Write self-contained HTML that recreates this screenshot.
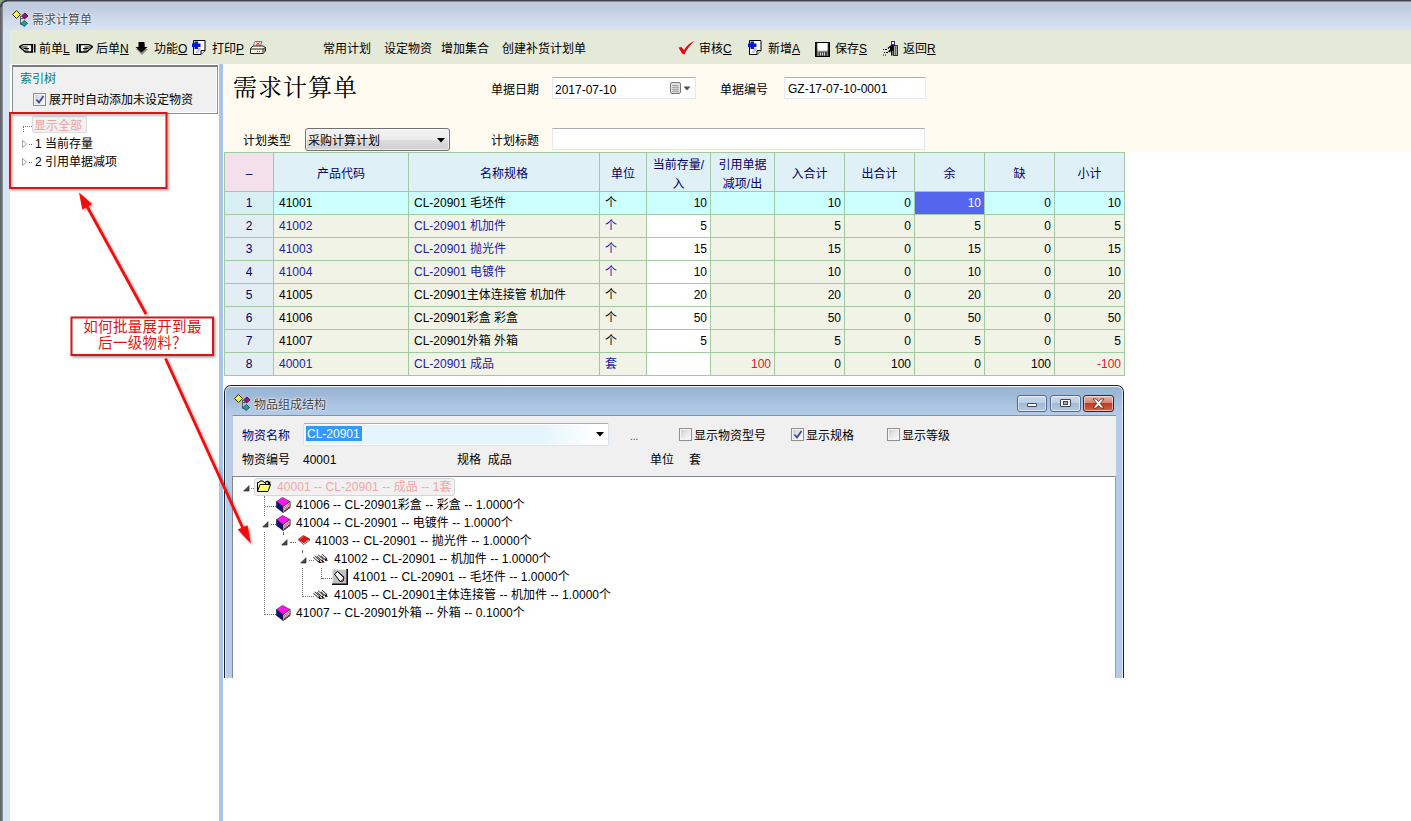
<!DOCTYPE html>
<html lang="zh-CN">
<head>
<meta charset="utf-8">
<title>需求计算单</title>
<style>
*{box-sizing:border-box;margin:0;padding:0}
html,body{width:1411px;height:821px;overflow:hidden;background:#fff}
body{font-family:"Liberation Sans","Noto Sans CJK SC",sans-serif;font-size:12px;color:#000;position:relative;line-height:14px}
.abs{position:absolute}
.t{position:absolute;white-space:nowrap;line-height:14px}
u{text-decoration:underline}
.c{position:absolute;height:22px;line-height:23px;white-space:nowrap;overflow:hidden}
.h{position:absolute;height:38px;color:#000066;text-align:center;line-height:15px;display:flex;align-items:center;justify-content:center;padding-top:4px}
.r{text-align:right;padding-right:3px}
.l{padding-left:5px}
.ctr{text-align:center}
.bl{color:#2020a8}
.rd{color:#d8202a}
.chk{position:absolute;width:13px;height:13px;border:1px solid #8e8f8f;background:linear-gradient(135deg,#c4c8ce,#e6e8ea 50%,#fbfbfb);box-shadow:inset 0 0 0 1px #f4f4f4}
.wb{position:absolute;border:1px solid #56698a;border-radius:3px;box-shadow:inset 0 0 0 1px rgba(255,255,255,.55)}
.dv{position:absolute;width:1px;border-left:1px dotted #6e6e6e}
.dh{position:absolute;height:1px;border-top:1px dotted #6e6e6e}
</style>
</head>
<body>
<div class="abs" style="left:0px;top:0px;width:1411px;height:30px;background:linear-gradient(#bec8da 0,#c3cde0 30%,#cfdaea 65%,#d7e3f2 100%)"></div>
<div class="abs" style="left:10px;top:30px;width:1401px;height:34px;background:#e4e9d8"></div>
<div class="abs" style="left:10px;top:64px;width:209px;height:757px;background:#fff"></div>
<div class="abs" style="left:223px;top:64px;width:1188px;height:88px;background:#fffbf0"></div>
<div class="abs" style="left:219px;top:64px;width:4px;height:757px;background:#a9c4ec"></div>
<div class="abs" style="left:0px;top:30px;width:10px;height:791px;background:#d6e5f5"></div>
<div class="abs" style="left:0px;top:0px;width:3px;height:821px;background:linear-gradient(90deg,#55585e,#8d9096)"></div>
<div class="abs" style="left:0px;top:0px;width:1411px;height:2px;background:linear-gradient(#3c4049 0,#3c4049 55%,#e8eef8 100%)"></div>
<svg class="abs" style="left:0;top:0" width="8" height="8" viewBox="0 0 8 8"><path d="M0 0h6C3 .5 .5 3 0 6z" fill="#8a9a7a"/><path d="M.8 7C1.200 3.500 3.500 1.200 7 .8" fill="none" stroke="#3c4049" stroke-width="1.600"/></svg>
<svg class="abs" style="left:12px;top:10px" width="17" height="17" viewBox="0 0 17 17"><path d="M8.500 6v8.500h3M8.500 8.500h3" fill="none" stroke="#5a6068" stroke-width="1"/><path d="M0.500 4.500l4-4 4 4-4 4z" fill="#f0f020" stroke="#33331a" stroke-width="1"/><path d="M3 4.500l1.500-1.500" stroke="#fff" stroke-width="1"/><path d="M9.500 6l3.500-3 3 3-3.500 3z" fill="#a0107a" stroke="#3a1030" stroke-width=".8"/><path d="M9 13.500l3.500-3 3 3-3.500 3z" fill="#10a8a0" stroke="#104040" stroke-width=".8"/></svg>
<div class="t" style="left:32px;top:13px;color:#4c4f55;text-shadow:0 0 3px #fff,0 0 2px #fff">需求计算单</div>
<svg class="abs" style="left:19px;top:44px" width="17" height="9" viewBox="0 0 17 9"><path d="M0.500 2.700L4.500 0.500H13v7.500H6.500z" fill="#fff" stroke="#000" stroke-width="1.400"/><path d="M12.500 0h1.800v8.500h-1.800zM15 0h1.500v8.500H15z" fill="#000"/><path d="M14.300 1h.7v6.500h-.7z" fill="#b8ecec"/><path d="M2.500 3h6M4.500 4.500h5.500M6 6h3.500" stroke="#000" stroke-width="1" fill="none"/></svg>
<svg class="abs" style="left:76px;top:44px" width="17" height="9" viewBox="0 0 17 9"><path d="M16.500 2.700L12.500 0.500H4v7.500h6.500z" fill="#fff" stroke="#000" stroke-width="1.400"/><path d="M2.700 0h1.800v8.500H2.700zM0.500 0H2v8.500H0.500z" fill="#000"/><path d="M2 1h.7v6.500H2z" fill="#b8ecec"/><path d="M14.500 3h-6M12.500 4.500H7M11 6H7.500" stroke="#000" stroke-width="1" fill="none"/></svg>
<svg class="abs" style="left:135px;top:42px" width="13" height="13" viewBox="0 0 13 13"><path d="M4 2h6v5h3l-6 6-6-6h3z" fill="#8c8c84"/><path d="M3.500 0h6v5h3l-6 5.500-6-5.500h3z" fill="#000"/></svg>
<svg class="abs" style="left:192px;top:40px" width="14" height="15" viewBox="0 0 14 15"><path d="M1.500 0.500h11.500v10l-4 4h-7.500z" fill="#fff" stroke="#000" stroke-width="1"/><path d="M9 14.500v-4h4" fill="#d8d8d8" stroke="#000" stroke-width="1"/><path d="M5.500 8h3v3h-3z" fill="#c0c0d8"/><path d="M4 12h3" stroke="#9a9a9a" stroke-width="1"/><path d="M2.500 1.500h3.500v2h2.500v3.500h-2.500v2H2.500v-2H0V3.500h2.500z" fill="#0018e0"/></svg>
<svg class="abs" style="left:250px;top:41px" width="16" height="13" viewBox="0 0 16 13"><path d="M5 0.500h7l-2 5H3z" fill="#fff" stroke="#555" stroke-width=".8"/><path d="M6.500 1.500l3 2M9.500 1.500l-3 2M5.500 4h4" stroke="#e03030" stroke-width=".9"/><path d="M0.500 7.500l2.500-2.500h10l2.500 1.500v3.500l-2.500 2.500h-12.500z" fill="#fbf7e6" stroke="#222" stroke-width="1"/><path d="M0.500 8h12.500l2.500-1.500M13 8v4.500" fill="none" stroke="#222" stroke-width="1"/><path d="M13.500 8.500l1.500-1v3l-1.500 1.500z" fill="#888"/><path d="M7 10.500h1M9 10.500h1" stroke="#d03030" stroke-width="1"/></svg>
<svg class="abs" style="left:678px;top:41px" width="17" height="14" viewBox="0 0 17 14"><path d="M0.500 6.500l3-0.500 2.500 3C8.500 4.500 12 1.500 16.500 0 12 4 8.500 8.500 6.500 13.500 5 13 4.500 13 4 12.500z" fill="#e00c14"/></svg>
<svg class="abs" style="left:748px;top:40px" width="14" height="15" viewBox="0 0 14 15"><path d="M1.500 0.500h11.500v10l-4 4h-7.500z" fill="#fff" stroke="#000" stroke-width="1"/><path d="M9 14.500v-4h4" fill="#d8d8d8" stroke="#000" stroke-width="1"/><path d="M5.500 8h3v3h-3z" fill="#c0c0d8"/><path d="M4 12h3" stroke="#9a9a9a" stroke-width="1"/><path d="M2.500 1.500h3.500v2h2.500v3.500h-2.500v2H2.500v-2H0V3.500h2.500z" fill="#0018e0"/></svg>
<svg class="abs" style="left:815px;top:42px" width="15" height="15" viewBox="0 0 15 15"><rect x="0.500" y="0.500" width="14" height="14" fill="#c8c8c8" stroke="#000" stroke-width="1"/><path d="M1 1h1.500v13H1zM12.500 1h1.500v13h-1.500z" fill="#222"/><rect x="2.500" y="1" width="10" height="7.500" fill="#fff"/><rect x="3.500" y="9.500" width="8.500" height="4.500" fill="#444"/><path d="M5.500 10.500v3M7.500 10.500v3M9.500 10.500v3" stroke="#d8d8d8" stroke-width="1"/></svg>
<svg class="abs" style="left:883px;top:41px" width="15" height="15" viewBox="0 0 15 15"><rect x="8.500" y="0.500" width="3" height="3" fill="#fff" stroke="#402080" stroke-width="1"/><rect x="10.500" y="4.500" width="4" height="10" fill="#a8a8a8" stroke="#333" stroke-width="1"/><path d="M12.500 5v9" stroke="#666" stroke-width="1"/><path d="M8 4h2.500v5.500l-1 .5v4.500H8V10l-1.500 1.500L5 10.500 7 8.500V6.500L5.500 8 4.500 7z" fill="#000"/><path d="M0 8.500h1M2 8.500h2M1 11.500h1M3 11.500h2M0 14h1M2 14h1" stroke="#000" stroke-width="1"/></svg>
<div class="t" style="left:39px;top:42px;">前单<u>L</u></div>
<div class="t" style="left:96px;top:42px;">后单<u>N</u></div>
<div class="t" style="left:154px;top:42px;">功能<u>O</u></div>
<div class="t" style="left:212px;top:42px;">打印<u>P</u></div>
<div class="t" style="left:323px;top:42px;">常用计划</div>
<div class="t" style="left:384px;top:42px;">设定物资</div>
<div class="t" style="left:441px;top:42px;">增加集合</div>
<div class="t" style="left:502px;top:42px;">创建补货计划单</div>
<div class="t" style="left:699px;top:42px;">审核<u>C</u></div>
<div class="t" style="left:768px;top:42px;">新增<u>A</u></div>
<div class="t" style="left:835px;top:42px;">保存<u>S</u></div>
<div class="t" style="left:903px;top:42px;">返回<u>R</u></div>
<div class="abs" style="left:12px;top:65px;width:206px;height:49px;background:#f0f0f0;border:1px solid #8e8f8f;border-top:2px solid #7b7b7b;box-shadow:inset -1px -1px 0 #fff"></div>
<div class="t" style="left:20px;top:72px;color:#008080">索引树</div>
<div class="chk" style="left:33px;top:93px;width:13px;height:13px;"><svg class="abs" style="left:1px;top:1px" width="10" height="10" viewBox="0 0 10 10"><path d="M1.500 4.500l2.500 3 4.500-6.500" fill="none" stroke="#3a4a9a" stroke-width="1.800"/></svg></div>
<div class="t" style="left:49px;top:93px;">展开时自动添加未设定物资</div>
<div class="dh" style="left:23px;top:126px;width:9px;height:1px;"></div>
<div class="dv" style="left:23px;top:126px;width:1px;height:6px;"></div>
<div class="abs" style="left:32px;top:116px;width:55px;height:17px;background:#f2f2f2;border:1px solid #dcdcdc;border-radius:2px"></div>
<div class="t" style="left:34px;top:119px;color:#f0a0a0">显示全部</div>
<svg class="abs" style="left:21px;top:139px" width="8" height="10" viewBox="0 0 8 10"><path d="M1.500 1.500l4 3.500-4 3.500z" fill="#fff" stroke="#a0a0a0" stroke-width="1"/></svg>
<svg class="abs" style="left:21px;top:157px" width="8" height="10" viewBox="0 0 8 10"><path d="M1.500 1.500l4 3.500-4 3.500z" fill="#fff" stroke="#a0a0a0" stroke-width="1"/></svg>
<div class="dh" style="left:29px;top:144px;width:3px;height:1px;"></div>
<div class="dh" style="left:29px;top:162px;width:3px;height:1px;"></div>
<div class="t" style="left:35px;top:137px;">1 当前存量</div>
<div class="t" style="left:35px;top:155px;">2 引用单据减项</div>
<div class="t" style="left:233px;top:73px;font-family:'Liberation Serif','Noto Serif CJK SC',serif;font-size:24px;line-height:30px;letter-spacing:1px">需求计算单</div>
<div class="t" style="left:491px;top:83px;">单据日期</div>
<div class="abs" style="left:552px;top:77px;width:144px;height:22px;background:#fff;border:1px solid #e3e9ef;border-top-color:#abadb3"></div>
<div class="t" style="left:555px;top:83px;">2017-07-10</div>
<svg class="abs" style="left:670px;top:82px" width="22" height="13" viewBox="0 0 22 13"><rect x=".5" y=".5" width="10" height="11" rx="1.500" fill="#e4e4e4" stroke="#7a7a7a"/><path d="M2 3.500h7M2 5.500h7M2 7.500h7M2 9.500h7M4 2.500v8M7 2.500v8" stroke="#a0a0a0" stroke-width=".8"/><path d="M13.500 4.500h7l-3.500 4z" fill="#505050"/></svg>
<div class="t" style="left:720px;top:83px;">单据编号</div>
<div class="abs" style="left:784px;top:77px;width:142px;height:22px;background:#fff;border:1px solid #e3e9ef;border-top-color:#abadb3"></div>
<div class="t" style="left:788px;top:82px;">GZ-17-07-10-0001</div>
<div class="t" style="left:243px;top:134px;">计划类型</div>
<div class="abs" style="left:305px;top:128px;width:145px;height:23px;border:1px solid #707070;border-radius:3px;background:linear-gradient(#f2f2f2,#ebebeb 50%,#dddddd 51%,#cfcfcf);box-shadow:inset 0 0 0 1px rgba(255,255,255,.6)"></div>
<div class="t" style="left:308px;top:134px;">采购计算计划</div>
<svg class="abs" style="left:437px;top:138px" width="8" height="5" viewBox="0 0 8 5"><path d="M0 0h8l-4 4.500z" fill="#000"/></svg>
<div class="t" style="left:491px;top:134px;">计划标题</div>
<div class="abs" style="left:552px;top:128px;width:373px;height:22px;background:#fff;border:1px solid #e3e9ef;border-top-color:#abadb3"></div>
<div class="abs" style="left:224px;top:152px;width:901px;height:224px;background:#a3c9a3"></div>
<div class="h" style="left:225px;top:153px;width:48px;background:#f3e0ea;">–</div>
<div class="h" style="left:274px;top:153px;width:134px;background:#dff0f7;">产品代码</div>
<div class="h" style="left:409px;top:153px;width:190px;background:#dff0f7;">名称规格</div>
<div class="h" style="left:600px;top:153px;width:46px;background:#dff0f7;">单位</div>
<div class="h" style="left:647px;top:153px;width:63px;background:#dff0f7;line-height:19px;padding-top:6px;">当前存量/<br>入</div>
<div class="h" style="left:711px;top:153px;width:63px;background:#dff0f7;line-height:19px;padding-top:6px;">引用单据<br>减项/出</div>
<div class="h" style="left:775px;top:153px;width:69px;background:#dff0f7;">入合计</div>
<div class="h" style="left:845px;top:153px;width:69px;background:#dff0f7;">出合计</div>
<div class="h" style="left:915px;top:153px;width:69px;background:#dff0f7;">余</div>
<div class="h" style="left:985px;top:153px;width:69px;background:#dff0f7;">缺</div>
<div class="h" style="left:1055px;top:153px;width:69px;background:#dff0f7;">小计</div>
<div class="c ctr" style="left:225px;top:192px;width:48px;background:#d8f0f4;color:#000066;">1</div>
<div class="c l" style="left:274px;top:192px;width:134px;background:#ccffff;">41001</div>
<div class="c l" style="left:409px;top:192px;width:190px;background:#ccffff;">CL-20901 毛坯件</div>
<div class="c l" style="left:600px;top:192px;width:46px;background:#ccffff;">个</div>
<div class="c r" style="left:647px;top:192px;width:63px;background:#ccffff;">10</div>
<div class="c r" style="left:711px;top:192px;width:63px;background:#ccffff;"></div>
<div class="c r" style="left:775px;top:192px;width:69px;background:#ccffff;">10</div>
<div class="c r" style="left:845px;top:192px;width:69px;background:#ccffff;">0</div>
<div class="c r" style="left:915px;top:192px;width:69px;background:#5566ee;color:#fff;">10</div>
<div class="c r" style="left:985px;top:192px;width:69px;background:#ccffff;">0</div>
<div class="c r" style="left:1055px;top:192px;width:69px;background:#ccffff;">10</div>
<div class="c ctr" style="left:225px;top:215px;width:48px;background:#e2eef4;color:#000066;">2</div>
<div class="c l bl" style="left:274px;top:215px;width:134px;background:#f0f3e6;">41002</div>
<div class="c l bl" style="left:409px;top:215px;width:190px;background:#f0f3e6;">CL-20901 机加件</div>
<div class="c l bl" style="left:600px;top:215px;width:46px;background:#f0f3e6;">个</div>
<div class="c r" style="left:647px;top:215px;width:63px;background:#ffffff;">5</div>
<div class="c r" style="left:711px;top:215px;width:63px;background:#f0f3e6;"></div>
<div class="c r" style="left:775px;top:215px;width:69px;background:#f0f3e6;">5</div>
<div class="c r" style="left:845px;top:215px;width:69px;background:#f0f3e6;">0</div>
<div class="c r" style="left:915px;top:215px;width:69px;background:#f0f3e6;">5</div>
<div class="c r" style="left:985px;top:215px;width:69px;background:#f0f3e6;">0</div>
<div class="c r" style="left:1055px;top:215px;width:69px;background:#f0f3e6;">5</div>
<div class="c ctr" style="left:225px;top:238px;width:48px;background:#e2eef4;color:#000066;">3</div>
<div class="c l bl" style="left:274px;top:238px;width:134px;background:#f0f3e6;">41003</div>
<div class="c l bl" style="left:409px;top:238px;width:190px;background:#f0f3e6;">CL-20901 抛光件</div>
<div class="c l bl" style="left:600px;top:238px;width:46px;background:#f0f3e6;">个</div>
<div class="c r" style="left:647px;top:238px;width:63px;background:#ffffff;">15</div>
<div class="c r" style="left:711px;top:238px;width:63px;background:#f0f3e6;"></div>
<div class="c r" style="left:775px;top:238px;width:69px;background:#f0f3e6;">15</div>
<div class="c r" style="left:845px;top:238px;width:69px;background:#f0f3e6;">0</div>
<div class="c r" style="left:915px;top:238px;width:69px;background:#f0f3e6;">15</div>
<div class="c r" style="left:985px;top:238px;width:69px;background:#f0f3e6;">0</div>
<div class="c r" style="left:1055px;top:238px;width:69px;background:#f0f3e6;">15</div>
<div class="c ctr" style="left:225px;top:261px;width:48px;background:#e2eef4;color:#000066;">4</div>
<div class="c l bl" style="left:274px;top:261px;width:134px;background:#f0f3e6;">41004</div>
<div class="c l bl" style="left:409px;top:261px;width:190px;background:#f0f3e6;">CL-20901 电镀件</div>
<div class="c l bl" style="left:600px;top:261px;width:46px;background:#f0f3e6;">个</div>
<div class="c r" style="left:647px;top:261px;width:63px;background:#ffffff;">10</div>
<div class="c r" style="left:711px;top:261px;width:63px;background:#f0f3e6;"></div>
<div class="c r" style="left:775px;top:261px;width:69px;background:#f0f3e6;">10</div>
<div class="c r" style="left:845px;top:261px;width:69px;background:#f0f3e6;">0</div>
<div class="c r" style="left:915px;top:261px;width:69px;background:#f0f3e6;">10</div>
<div class="c r" style="left:985px;top:261px;width:69px;background:#f0f3e6;">0</div>
<div class="c r" style="left:1055px;top:261px;width:69px;background:#f0f3e6;">10</div>
<div class="c ctr" style="left:225px;top:284px;width:48px;background:#e2eef4;color:#000066;">5</div>
<div class="c l" style="left:274px;top:284px;width:134px;background:#f0f3e6;">41005</div>
<div class="c l" style="left:409px;top:284px;width:190px;background:#f0f3e6;">CL-20901主体连接管 机加件</div>
<div class="c l" style="left:600px;top:284px;width:46px;background:#f0f3e6;">个</div>
<div class="c r" style="left:647px;top:284px;width:63px;background:#ffffff;">20</div>
<div class="c r" style="left:711px;top:284px;width:63px;background:#f0f3e6;"></div>
<div class="c r" style="left:775px;top:284px;width:69px;background:#f0f3e6;">20</div>
<div class="c r" style="left:845px;top:284px;width:69px;background:#f0f3e6;">0</div>
<div class="c r" style="left:915px;top:284px;width:69px;background:#f0f3e6;">20</div>
<div class="c r" style="left:985px;top:284px;width:69px;background:#f0f3e6;">0</div>
<div class="c r" style="left:1055px;top:284px;width:69px;background:#f0f3e6;">20</div>
<div class="c ctr" style="left:225px;top:307px;width:48px;background:#e2eef4;color:#000066;">6</div>
<div class="c l" style="left:274px;top:307px;width:134px;background:#f0f3e6;">41006</div>
<div class="c l" style="left:409px;top:307px;width:190px;background:#f0f3e6;">CL-20901彩盒 彩盒</div>
<div class="c l" style="left:600px;top:307px;width:46px;background:#f0f3e6;">个</div>
<div class="c r" style="left:647px;top:307px;width:63px;background:#ffffff;">50</div>
<div class="c r" style="left:711px;top:307px;width:63px;background:#f0f3e6;"></div>
<div class="c r" style="left:775px;top:307px;width:69px;background:#f0f3e6;">50</div>
<div class="c r" style="left:845px;top:307px;width:69px;background:#f0f3e6;">0</div>
<div class="c r" style="left:915px;top:307px;width:69px;background:#f0f3e6;">50</div>
<div class="c r" style="left:985px;top:307px;width:69px;background:#f0f3e6;">0</div>
<div class="c r" style="left:1055px;top:307px;width:69px;background:#f0f3e6;">50</div>
<div class="c ctr" style="left:225px;top:330px;width:48px;background:#e2eef4;color:#000066;">7</div>
<div class="c l" style="left:274px;top:330px;width:134px;background:#f0f3e6;">41007</div>
<div class="c l" style="left:409px;top:330px;width:190px;background:#f0f3e6;">CL-20901外箱 外箱</div>
<div class="c l" style="left:600px;top:330px;width:46px;background:#f0f3e6;">个</div>
<div class="c r" style="left:647px;top:330px;width:63px;background:#ffffff;">5</div>
<div class="c r" style="left:711px;top:330px;width:63px;background:#f0f3e6;"></div>
<div class="c r" style="left:775px;top:330px;width:69px;background:#f0f3e6;">5</div>
<div class="c r" style="left:845px;top:330px;width:69px;background:#f0f3e6;">0</div>
<div class="c r" style="left:915px;top:330px;width:69px;background:#f0f3e6;">5</div>
<div class="c r" style="left:985px;top:330px;width:69px;background:#f0f3e6;">0</div>
<div class="c r" style="left:1055px;top:330px;width:69px;background:#f0f3e6;">5</div>
<div class="c ctr" style="left:225px;top:353px;width:48px;background:#e2eef4;color:#000066;">8</div>
<div class="c l bl" style="left:274px;top:353px;width:134px;background:#f0f3e6;">40001</div>
<div class="c l bl" style="left:409px;top:353px;width:190px;background:#f0f3e6;">CL-20901 成品</div>
<div class="c l bl" style="left:600px;top:353px;width:46px;background:#f0f3e6;">套</div>
<div class="c r" style="left:647px;top:353px;width:63px;background:#ffffff;"></div>
<div class="c r rd" style="left:711px;top:353px;width:63px;background:#f0f3e6;">100</div>
<div class="c r" style="left:775px;top:353px;width:69px;background:#f0f3e6;">0</div>
<div class="c r" style="left:845px;top:353px;width:69px;background:#f0f3e6;">100</div>
<div class="c r" style="left:915px;top:353px;width:69px;background:#f0f3e6;">0</div>
<div class="c r" style="left:985px;top:353px;width:69px;background:#f0f3e6;">100</div>
<div class="c r rd" style="left:1055px;top:353px;width:69px;background:#f0f3e6;">-100</div>
<div class="abs" style="left:224px;top:385px;width:900px;height:293px;border:1px solid #1c2026;border-bottom:none;border-radius:7px 7px 0 0;background:linear-gradient(#97b3d3 0,#a0bbda 10px,#adc7e4 22px,#b4cce8 30px,#b5cce8 31px)"></div>
<div class="abs" style="left:225px;top:386px;width:898px;height:292px;border:1px solid rgba(255,255,255,.6);border-top-color:rgba(255,255,255,.9);border-bottom:none;border-radius:6px 6px 0 0"></div>
<svg class="abs" style="left:234px;top:394px" width="17" height="17" viewBox="0 0 17 17"><path d="M8.500 6v8.500h3M8.500 8.500h3" fill="none" stroke="#5a6068" stroke-width="1"/><path d="M0.500 4.500l4-4 4 4-4 4z" fill="#f0f020" stroke="#33331a" stroke-width="1"/><path d="M3 4.500l1.500-1.500" stroke="#fff" stroke-width="1"/><path d="M9.500 6l3.500-3 3 3-3.500 3z" fill="#a0107a" stroke="#3a1030" stroke-width=".8"/><path d="M9 13.500l3.500-3 3 3-3.500 3z" fill="#10a8a0" stroke="#104040" stroke-width=".8"/></svg>
<div class="t" style="left:254px;top:398px;color:#3a3f48;text-shadow:0 0 3px #fff,0 0 2px #fff">物品组成结构</div>
<div class="wb" style="left:1017px;top:395px;width:30px;height:17px;background:linear-gradient(#cbdaec 0,#bccfe6 45%,#a2b9d8 50%,#b3c8e2 100%)"><div class="abs" style="left:9px;top:7px;width:10px;height:4px;border:1px solid #3c4654;background:#fff;border-radius:1px"></div></div>
<div class="wb" style="left:1050px;top:395px;width:31px;height:17px;background:linear-gradient(#cbdaec 0,#bccfe6 45%,#a2b9d8 50%,#b3c8e2 100%)"><div class="abs" style="left:9px;top:3px;width:11px;height:8px;border:1px solid #3c4654;background:#fff;border-radius:1px"><div class="abs" style="left:2px;top:1px;width:5px;height:4px;border:1px solid #3c4654;background:#aab"></div></div></div>
<div class="wb" style="left:1083px;top:395px;width:31px;height:17px;border-color:#4a1e18;background:linear-gradient(#e8b4a8 0,#d98572 45%,#c0391f 50%,#d26548 100%)"><svg class="abs" style="left:8px;top:2px" width="13" height="11" viewBox="0 0 13 11"><path d="M1 1h3.200l2.300 2.500 2.300-2.500H12l-3.800 4.500 3.800 4.500H8.800l-2.300-2.500-2.300 2.500H1l3.800-4.500z" fill="#fff" stroke="#4a2a28" stroke-width=".8"/></svg></div>
<div class="abs" style="left:232px;top:415px;width:884px;height:263px;background:#f0f0f0;border-top:1px solid #7f90a8;border-left:1px solid #b8c6d8"></div>
<div class="t" style="left:242px;top:429px;color:#000080">物资名称</div>
<div class="abs" style="left:303px;top:423px;width:306px;height:23px;background:linear-gradient(90deg,#e4f6fb 0,#e4f6fb 78%,#fff 96%);border:1px solid #dde3ea;border-top-color:#a6a9b0;border-radius:2px;box-shadow:inset 0 0 0 1px #fff"></div>
<div class="abs" style="left:306px;top:426px;width:56px;height:15px;background:#3399ff"></div>
<div class="t" style="left:307px;top:427px;color:#fff">CL-20901</div>
<svg class="abs" style="left:596px;top:432px" width="8" height="5" viewBox="0 0 8 5"><path d="M0 0h8l-4 4.500z" fill="#000"/></svg>
<div class="t" style="left:630px;top:430px;color:#444;font-size:10px">...</div>
<div class="chk" style="left:679px;top:428px;width:13px;height:13px;"></div>
<div class="t" style="left:694px;top:429px;">显示物资型号</div>
<div class="chk" style="left:791px;top:428px;width:13px;height:13px;"><svg class="abs" style="left:1px;top:1px" width="10" height="10" viewBox="0 0 10 10"><path d="M1.500 4.500l2.500 3 4.500-6.500" fill="none" stroke="#3a4a9a" stroke-width="1.800"/></svg></div>
<div class="t" style="left:806px;top:429px;">显示规格</div>
<div class="chk" style="left:887px;top:428px;width:13px;height:13px;"></div>
<div class="t" style="left:902px;top:429px;">显示等级</div>
<div class="t" style="left:242px;top:453px;">物资编号</div>
<div class="t" style="left:303px;top:453px;">40001</div>
<div class="t" style="left:457px;top:453px;">规格&nbsp; 成品</div>
<div class="t" style="left:650px;top:453px;">单位</div>
<div class="t" style="left:689px;top:453px;">套</div>
<div class="abs" style="left:232px;top:476px;width:884px;height:202px;background:#fff;border-top:1px solid #828790;border-left:1px solid #828790"></div>
<div class="abs" style="left:1115px;top:476px;width:1px;height:202px;background:#93a3b8"></div>
<div class="dv" style="left:264px;top:496px;width:1px;height:20px;"></div>
<div class="dv" style="left:264px;top:532px;width:1px;height:83px;"></div>
<div class="dh" style="left:265px;top:506px;width:11px;height:1px;"></div>
<div class="dh" style="left:271px;top:524px;width:5px;height:1px;"></div>
<div class="dh" style="left:265px;top:614px;width:11px;height:1px;"></div>
<div class="dh" style="left:251px;top:488px;width:5px;height:1px;"></div>
<div class="dv" style="left:283px;top:532px;width:1px;height:2px;"></div>
<div class="dh" style="left:290px;top:542px;width:6px;height:1px;"></div>
<div class="dv" style="left:302px;top:550px;width:1px;height:2px;"></div>
<div class="dv" style="left:302px;top:568px;width:1px;height:29px;"></div>
<div class="dh" style="left:309px;top:560px;width:5px;height:1px;"></div>
<div class="dh" style="left:303px;top:596px;width:11px;height:1px;"></div>
<div class="dv" style="left:321px;top:568px;width:1px;height:11px;"></div>
<div class="dh" style="left:322px;top:578px;width:10px;height:1px;"></div>
<div class="abs" style="left:254px;top:478px;width:201px;height:18px;background:#f1f1f1;border:1px solid #d6d6d6;border-radius:3px"></div>
<svg class="abs" style="left:243px;top:485px" width="7" height="7" viewBox="0 0 7 7"><path d="M6 0.700v5.300H0.700z" fill="#484848" stroke="#2a2a2a" stroke-width=".7"/></svg>
<svg class="abs" style="left:257px;top:480px" width="14" height="12" viewBox="0 0 14 12"><path d="M0.500 11V2.500h1.500l1-1.500h3l1 1.500h1.500V4" fill="#ffff90" stroke="#000" stroke-width="1"/><path d="M0.500 11.500l2.500-7h10.500l-2.500 7z" fill="#ffff70" stroke="#000" stroke-width="1"/><path d="M8 1.800c1.500-1.600 3.500-1.400 4.400.3l.9-.9v2.800h-2.800l1-1c-.7-1-1.800-1.100-2.600-.4z" fill="#000"/></svg>
<div class="t" style="left:277px;top:480px;color:#f4a6a6;letter-spacing:.06px">40001 -- CL-20901 -- 成品 -- 1套</div>
<svg class="abs" style="left:276px;top:497px" width="15" height="16" viewBox="0 0 15 16"><path d="M0.500 4.500v6l6.500 5 7-5v-6z" fill="#10107a" stroke="#000040" stroke-width=".6"/><path d="M7 9.500v6l7-5v-6z" fill="#f6f6f6" stroke="#303030" stroke-width=".6"/><path d="M7.500 11l6.500-4.500M7.500 12.500l6.500-4.500M7.500 14l6.500-4.500" stroke="#c01818" stroke-width=".7"/><path d="M9 14.500v-1.500M11 13v-1.500M13 11.500v-1.500" stroke="#000" stroke-width=".9"/><path d="M0.500 4.500l6-4 7.500 4-7 5z" fill="#ff14ea" stroke="#50105a" stroke-width=".6"/></svg>
<div class="t" style="left:296px;top:498px;letter-spacing:.06px">41006 -- CL-20901彩盒 -- 彩盒 -- 1.0000个</div>
<svg class="abs" style="left:262px;top:521px" width="7" height="7" viewBox="0 0 7 7"><path d="M6 0.700v5.300H0.700z" fill="#484848" stroke="#2a2a2a" stroke-width=".7"/></svg>
<svg class="abs" style="left:276px;top:515px" width="15" height="16" viewBox="0 0 15 16"><path d="M0.500 4.500v6l6.500 5 7-5v-6z" fill="#10107a" stroke="#000040" stroke-width=".6"/><path d="M7 9.500v6l7-5v-6z" fill="#f6f6f6" stroke="#303030" stroke-width=".6"/><path d="M7.500 11l6.500-4.500M7.500 12.500l6.500-4.500M7.500 14l6.500-4.500" stroke="#c01818" stroke-width=".7"/><path d="M9 14.500v-1.500M11 13v-1.500M13 11.500v-1.500" stroke="#000" stroke-width=".9"/><path d="M0.500 4.500l6-4 7.500 4-7 5z" fill="#ff14ea" stroke="#50105a" stroke-width=".6"/></svg>
<div class="t" style="left:296px;top:516px;letter-spacing:.06px">41004 -- CL-20901 -- 电镀件 -- 1.0000个</div>
<svg class="abs" style="left:281px;top:539px" width="7" height="7" viewBox="0 0 7 7"><path d="M6 0.700v5.300H0.700z" fill="#484848" stroke="#2a2a2a" stroke-width=".7"/></svg>
<svg class="abs" style="left:298px;top:535px" width="12" height="11" viewBox="0 0 12 11"><path d="M0.500 5l5 4.500 6-4V4z" fill="#fff" stroke="#701010" stroke-width=".7"/><path d="M0.500 4l5-3.500 6 3.500-6 4z" fill="#e01414" stroke="#801010" stroke-width=".6"/><path d="M2 4l3.500-2.500" stroke="#ff8080" stroke-width=".7"/></svg>
<div class="t" style="left:315px;top:534px;letter-spacing:.06px">41003 -- CL-20901 -- 抛光件 -- 1.0000个</div>
<svg class="abs" style="left:300px;top:557px" width="7" height="7" viewBox="0 0 7 7"><path d="M6 0.700v5.300H0.700z" fill="#484848" stroke="#2a2a2a" stroke-width=".7"/></svg>
<svg class="abs" style="left:313px;top:554px" width="16" height="10" viewBox="0 0 16 10"><path d="M1 2.500l5.500 5M4.500 1.500l5.500 5M8.500 1l5 4.500" stroke="#111" stroke-width="2.600" fill="none"/><path d="M0.500 2l5.500 5M4 1l5.500 5M8 0.500l5 4.500" stroke="#fff" stroke-width="1.100" fill="none"/><path d="M5.500 6.500l4 2.500h-3.500zM9 6l3 2.500h-3zM12.500 4l2.500 2.500-3 .5z" fill="#000"/></svg>
<div class="t" style="left:334px;top:552px;letter-spacing:.06px">41002 -- CL-20901 -- 机加件 -- 1.0000个</div>
<svg class="abs" style="left:332px;top:569px" width="16" height="16" viewBox="0 0 16 16"><rect x="0" y="0" width="16" height="16" fill="#c2c2c2"/><path d="M0.500 15.500V0.500H15" fill="none" stroke="#e8e8e8" stroke-width="1"/><path d="M15.200 0v15.200H0" fill="none" stroke="#101010" stroke-width="1.600"/><path d="M2.500 5l3-2.500 6.500 6-1 3.500-3 .5z" fill="#f4f4f4" stroke="#000" stroke-width="1"/><path d="M5.500 2.500l6.500 6" stroke="#000" stroke-width="1"/><path d="M7 12l1-1M9.500 11.500l1-1" stroke="#000" stroke-width="1"/></svg>
<div class="t" style="left:353px;top:570px;letter-spacing:.06px">41001 -- CL-20901 -- 毛坯件 -- 1.0000个</div>
<svg class="abs" style="left:313px;top:590px" width="16" height="10" viewBox="0 0 16 10"><path d="M1 2.500l5.500 5M4.500 1.500l5.500 5M8.500 1l5 4.500" stroke="#111" stroke-width="2.600" fill="none"/><path d="M0.500 2l5.500 5M4 1l5.500 5M8 0.500l5 4.500" stroke="#fff" stroke-width="1.100" fill="none"/><path d="M5.500 6.500l4 2.500h-3.500zM9 6l3 2.500h-3zM12.500 4l2.500 2.500-3 .5z" fill="#000"/></svg>
<div class="t" style="left:334px;top:588px;letter-spacing:.06px">41005 -- CL-20901主体连接管 -- 机加件 -- 1.0000个</div>
<svg class="abs" style="left:276px;top:605px" width="15" height="16" viewBox="0 0 15 16"><path d="M0.500 4.500v6l6.500 5 7-5v-6z" fill="#10107a" stroke="#000040" stroke-width=".6"/><path d="M7 9.500v6l7-5v-6z" fill="#f6f6f6" stroke="#303030" stroke-width=".6"/><path d="M7.500 11l6.500-4.500M7.500 12.500l6.500-4.500M7.500 14l6.500-4.500" stroke="#c01818" stroke-width=".7"/><path d="M9 14.500v-1.500M11 13v-1.500M13 11.500v-1.500" stroke="#000" stroke-width=".9"/><path d="M0.500 4.500l6-4 7.500 4-7 5z" fill="#ff14ea" stroke="#50105a" stroke-width=".6"/></svg>
<div class="t" style="left:296px;top:606px;letter-spacing:.06px">41007 -- CL-20901外箱 -- 外箱 -- 0.1000个</div>
<svg class="abs" style="left:0;top:100px" width="300" height="460" viewBox="0 100 300 460">
<defs><filter id="sh" x="-20%" y="-20%" width="140%" height="140%"><feDropShadow dx="1.500" dy="1.500" stdDeviation="1.300" flood-color="#000" flood-opacity=".38"/></filter></defs>
<g filter="url(#sh)" fill="none">
<rect x="10" y="113" width="156.500" height="75" stroke="#d41818" stroke-width="2"/>
<rect x="71.500" y="317.500" width="141.500" height="37.500" stroke="#d41818" stroke-width="2" fill="#fff"/>
<path d="M146 314L86 204.500" stroke="#f20808" stroke-width="2.700"/>
<path d="M79.100 192.600L82.300 209.600 92.100 204.100z" fill="#f20808"/>
<path d="M165.500 358.500L243 528.500" stroke="#f20808" stroke-width="2.700"/>
<path d="M250.800 543.500L237.700 529.600 247.500 525.200z" fill="#f20808"/>
</g>
</svg>
<div class="t" style="left:72px;top:319px;width:141px;text-align:center;color:#d81818;font-size:14.500px;line-height:16px;white-space:normal;letter-spacing:.3px">如何批量展开到最<br>后一级物料？</div>
</body>
</html>
